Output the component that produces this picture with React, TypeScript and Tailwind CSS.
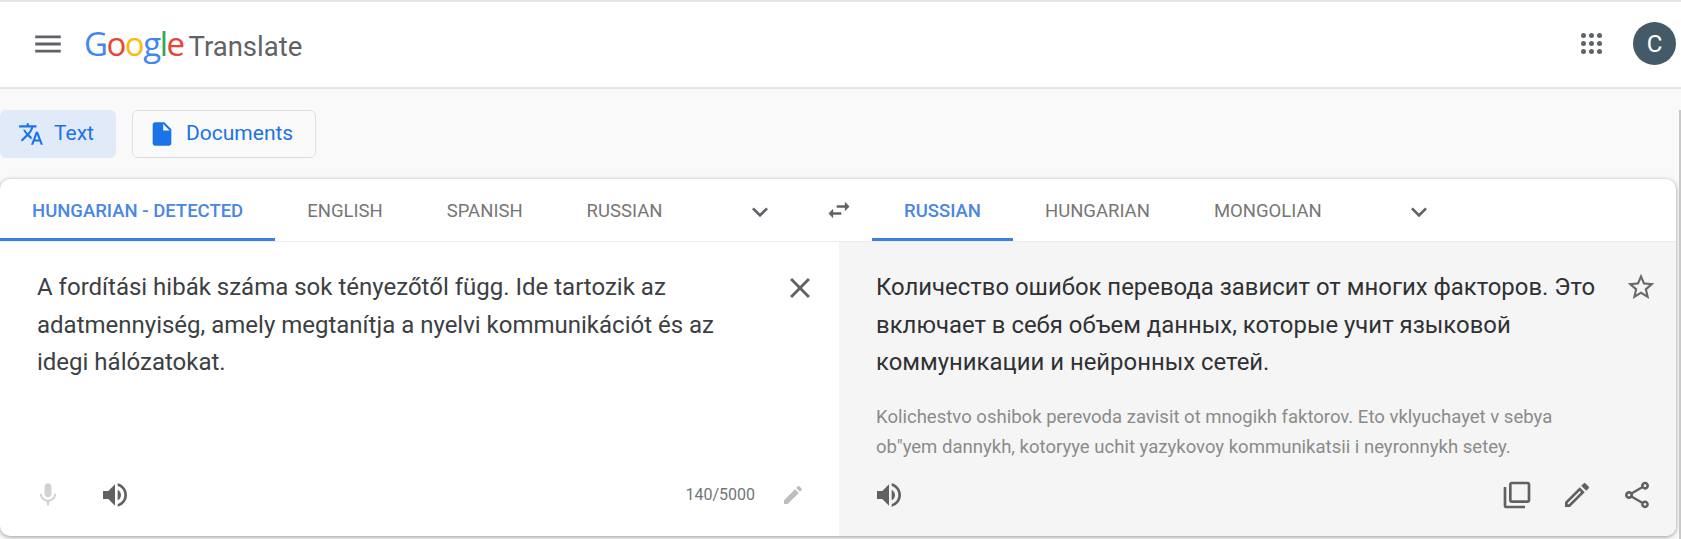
import React from 'react';

const Icon = ({ d, className }: { d: string; className: string }) => (
  <svg viewBox="0 0 24 24" className={className} fill="currentColor">
    <path d={d} />
  </svg>
);

const paths = {
  menu: 'M3 18h18v-2H3v2zm0-5h18v-2H3v2zm0-7v2h18V6H3z',
  translate:
    'M12.87 15.07l-2.54-2.51.03-.03c1.74-1.94 2.98-4.17 3.71-6.53H17V4h-7V2H8v2H1v1.99h11.17C11.5 7.92 10.44 9.75 9 11.35 8.07 10.32 7.3 9.19 6.69 8h-2c.73 1.63 1.73 3.17 2.98 4.56l-5.09 5.02L4 19l5-5 3.11 3.11.76-2.04zM18.5 10h-2L12 22h2l1.12-3h4.75L21 22h2l-4.5-12zm-2.62 7l1.62-4.33L19.12 17h-3.24z',
  file: 'M6 2c-1.1 0-1.99.9-1.99 2L4 20c0 1.1.89 2 1.99 2H18c1.1 0 2-.9 2-2V8l-6-6H6zm7 7V3.5L18.5 9H13z',
  chevron: 'M16.59 8.59L12 13.17 7.41 8.59 6 10l6 6 6-6z',
  swap: 'M6.99 11L3 15l3.99 4v-3H14v-2H6.99v-3zM21 9l-3.99-4v3H10v2h7.01v3L21 9z',
  close:
    'M19 6.41L17.59 5 12 10.59 6.41 5 5 6.41 10.59 12 5 17.59 6.41 19 12 13.41 17.59 19 19 17.59 13.41 12z',
  star: 'M22 9.24l-7.19-.62L12 2 9.19 8.63 2 9.24l5.46 4.73L5.82 21 12 17.27 18.18 21l-1.63-7.03L22 9.24zM12 15.4l-3.76 2.27 1-4.28-3.32-2.88 4.38-.38L12 6.1l1.71 4.04 4.38.38-3.32 2.88 1 4.28L12 15.4z',
  mic: 'M12 14c1.66 0 2.99-1.34 2.99-3L15 5c0-1.66-1.34-3-3-3S9 3.34 9 5v6c0 1.66 1.34 3 3 3zm5.3-3c0 3-2.54 5.1-5.3 5.1S6.7 14 6.7 11H5c0 3.41 2.72 6.23 6 6.72V21h2v-3.28c3.28-.48 6-3.3 6-6.72h-1.7z',
  volume:
    'M3 9v6h4l5 5V4L7 9H3zm13.5 3c0-1.77-1.02-3.29-2.5-4.03v8.05c1.48-.73 2.5-2.25 2.5-4.02zM14 3.23v2.06c2.89.86 5 3.54 5 6.71s-2.11 5.85-5 6.71v2.06c4.01-.91 7-4.49 7-8.77s-2.99-7.86-7-8.77z',
  edit: 'M3 17.25V21h3.75L17.81 9.94l-3.75-3.75L3 17.25zM20.71 7.04c.39-.39.39-1.02 0-1.41l-2.34-2.34c-.39-.39-1.02-.39-1.41 0l-1.83 1.83 3.75 3.75 1.83-1.83z',
  editOutline:
    'M14.06 9.02l.92.92L5.92 19H5v-.92l9.06-9.06M17.66 3c-.25 0-.51.1-.7.29l-1.83 1.83 3.75 3.75 1.83-1.83c.39-.39.39-1.02 0-1.41l-2.34-2.34c-.2-.2-.45-.29-.71-.29zm-3.6 3.19L3 17.25V21h3.75L17.81 9.94l-3.75-3.75z',
  copy: 'M4 6H2v14c0 1.1.9 2 2 2h14v-2H4V6zm16-4H8c-1.1 0-2 .9-2 2v12c0 1.1.9 2 2 2h12c1.1 0 2-.9 2-2V4c0-1.1-.9-2-2-2zm0 14H8V4h12v12z',
  share:
    'M18 16.08c-.76 0-1.44.3-1.96.77L8.91 12.7c.05-.23.09-.46.09-.7s-.04-.47-.09-.7l7.05-4.11c.54.5 1.25.81 2.04.81 1.66 0 3-1.34 3-3s-1.34-3-3-3-3 1.34-3 3c0 .24.04.47.09.7L8.04 9.81C7.5 9.31 6.79 9 6 9c-1.66 0-3 1.34-3 3s1.34 3 3 3c.79 0 1.5-.31 2.04-.81l7.12 4.16c-.05.21-.08.43-.08.65 0 1.61 1.31 2.92 2.92 2.92s2.92-1.31 2.92-2.92-1.31-2.92-2.92-2.92zM18 4c.55 0 1 .45 1 1s-.45 1-1 1-1-.45-1-1 .45-1 1-1zM6 13c-.55 0-1-.45-1-1s.45-1 1-1 1 .45 1 1-.45 1-1 1zm12 7.02c-.55 0-1-.45-1-1s.45-1 1-1 1 .45 1 1-.45 1-1 1z',
};

const LangTab = ({ label, active }: { label: string; active?: boolean }) => (
  <div
    className={`h-full px-8 pt-[7px] flex items-center text-[18.5px] border-b-[3px] ${
      active ? 'font-medium text-[#4a86e4] border-[#3f7fe3]' : 'text-[#767676] border-transparent'
    }`}
  >
    {label}
  </div>
);

const App = () => {
  return (
    <div className="w-[1681px] h-[539px] overflow-hidden flex flex-col bg-[#f9f9f9] font-['Roboto',sans-serif] relative">
      <header className="h-[89px] shrink-0 bg-white border-t-2 border-b-2 border-[#e6e6e6] flex items-center pl-[31px] pr-[5px] pb-[2px]">
        <Icon d={paths.menu} className="w-[34px] h-[34px] text-[#5f6368]" />
        <div className="ml-[19px] flex items-baseline font-['Open_Sans',sans-serif] text-[33px] leading-none tracking-[-1.5px]">
          <span className="text-[#4285f4]">G</span>
          <span className="text-[#ea4335]">o</span>
          <span className="text-[#fbbc05]">o</span>
          <span className="text-[#4285f4]">g</span>
          <span className="text-[#34a853]">l</span>
          <span className="text-[#ea4335]">e</span>
          <span className="ml-[5px] text-[#5f6368] text-[27.5px] font-['Roboto',sans-serif] tracking-normal">Translate</span>
        </div>
        <div className="ml-auto grid grid-cols-3 gap-[3px] mr-[31px]">
          {Array.from({ length: 9 }).map((_, i) => (
            <span key={i} className="w-[5px] h-[5px] rounded-full bg-[#5f6368]" />
          ))}
        </div>
        <div className="w-[43px] h-[43px] rounded-full bg-[#455a68] text-white flex items-center justify-center text-[24px]">
          C
        </div>
      </header>

      <div className="flex gap-4 pt-[21px] shrink-0">
        <div className="w-[116px] h-[48px] rounded-md bg-[#e1eaf9] flex items-center pl-[18px] gap-[10px] text-[#1a73e8] text-[21px]">
          <Icon d={paths.translate} className="w-[26px] h-[26px]" />
          <span>Text</span>
        </div>
        <div className="w-[184px] h-[48px] rounded-md bg-[#fafafa] border border-[#dedede] flex items-center pl-[15px] gap-[10px] text-[#1a73e8] text-[21px]">
          <Icon d={paths.file} className="w-[28px] h-[28px]" />
          <span>Documents</span>
        </div>
      </div>

      <main className="mt-[21px] mr-[5px] h-[357px] bg-white rounded-[10px] shadow-[0_1px_4px_rgba(0,0,0,0.4)] overflow-hidden flex flex-col">
        <div className="h-[63px] shrink-0 flex items-center border-b border-[#ececec]">
          <div className="w-[839px] h-full flex items-center">
            <LangTab label="HUNGARIAN - DETECTED" active />
            <LangTab label="ENGLISH" />
            <LangTab label="SPANISH" />
            <LangTab label="RUSSIAN" />
            <Icon d={paths.chevron} className="ml-[50px] mt-[4px] w-[32px] h-[32px] text-[#5f6368]" />
          </div>
          <div className="w-0 flex justify-center">
            <Icon d={paths.swap} className="shrink-0 w-[28px] h-[28px] text-[#5f6368]" />
          </div>
          <div className="flex-1 h-full flex items-center pl-[33px]">
            <LangTab label="RUSSIAN" active />
            <LangTab label="HUNGARIAN" />
            <LangTab label="MONGOLIAN" />
            <Icon d={paths.chevron} className="ml-[49px] mt-[4px] w-[32px] h-[32px] text-[#5f6368]" />
          </div>
        </div>

        <div className="flex-1 flex min-h-0">
          <section className="w-[839px] flex flex-col pl-[37px] pr-[22px]">
            <div className="flex-1 flex items-start pt-[27px]">
              <p className="w-[700px] text-[24px] leading-[37.5px] text-[#3c4043]">
                A fordítási hibák száma sok tényezőtől függ. Ide tartozik az adatmennyiség, amely megtanítja a nyelvi
                kommunikációt és az idegi hálózatokat.
              </p>
              <Icon d={paths.close} className="ml-auto mt-[2px] w-[34px] h-[34px] text-[#5f6368]" />
            </div>
            <div className="h-[66px] shrink-0 flex items-center pb-[16px]">
              <Icon d={paths.mic} className="w-[28px] h-[28px] -ml-[3px] text-[#d2d2d2]" />
              <Icon d={paths.volume} className="ml-[37px] w-[32px] h-[32px] text-[#616161]" />
              <span className="ml-auto mr-[26px] text-[16px] text-[#70757a]">140/5000</span>
              <Icon d={paths.edit} className="mr-[12px] w-[24px] h-[24px] text-[#bdbdbd]" />
            </div>
          </section>

          <section className="flex-1 bg-[#f5f5f5] flex flex-col pl-[37px] pr-[23px]">
            <div className="flex-1 flex items-start pt-[27px]">
              <div className="w-[730px]">
                <p className="text-[23.9px] leading-[37.5px] text-[#303134]">
                  Количество ошибок перевода зависит от многих факторов. Это включает в себя объем данных, которые учит
                  языковой коммуникации и нейронных сетей.
                </p>
                <p className="mt-[20px] w-[690px] text-[18.55px] leading-[30px] text-[#8b8b8b]">
                  Kolichestvo oshibok perevoda zavisit ot mnogikh faktorov. Eto vklyuchayet v sebya ob"yem dannykh,
                  kotoryye uchit yazykovoy kommunikatsii i neyronnykh setey.
                </p>
              </div>
              <Icon d={paths.star} className="ml-auto mt-[2px] -mr-[4px] w-[32px] h-[32px] text-[#6a6a6a]" />
            </div>
            <div className="h-[66px] shrink-0 flex items-center pb-[16px]">
              <Icon d={paths.volume} className="-ml-[3px] w-[32px] h-[32px] text-[#616161]" />
              <Icon d={paths.copy} className="ml-auto w-[32px] h-[32px] text-[#616161]" />
              <Icon d={paths.editOutline} className="ml-[28px] w-[32px] h-[32px] text-[#616161]" />
              <Icon d={paths.share} className="ml-[28px] w-[32px] h-[32px] text-[#616161]" />
            </div>
          </section>
        </div>
      </main>

      <div className="absolute right-0 top-[110px] w-[2px] h-[429px] bg-[#c8c8c8]" />
    </div>
  );
};

export default App;
